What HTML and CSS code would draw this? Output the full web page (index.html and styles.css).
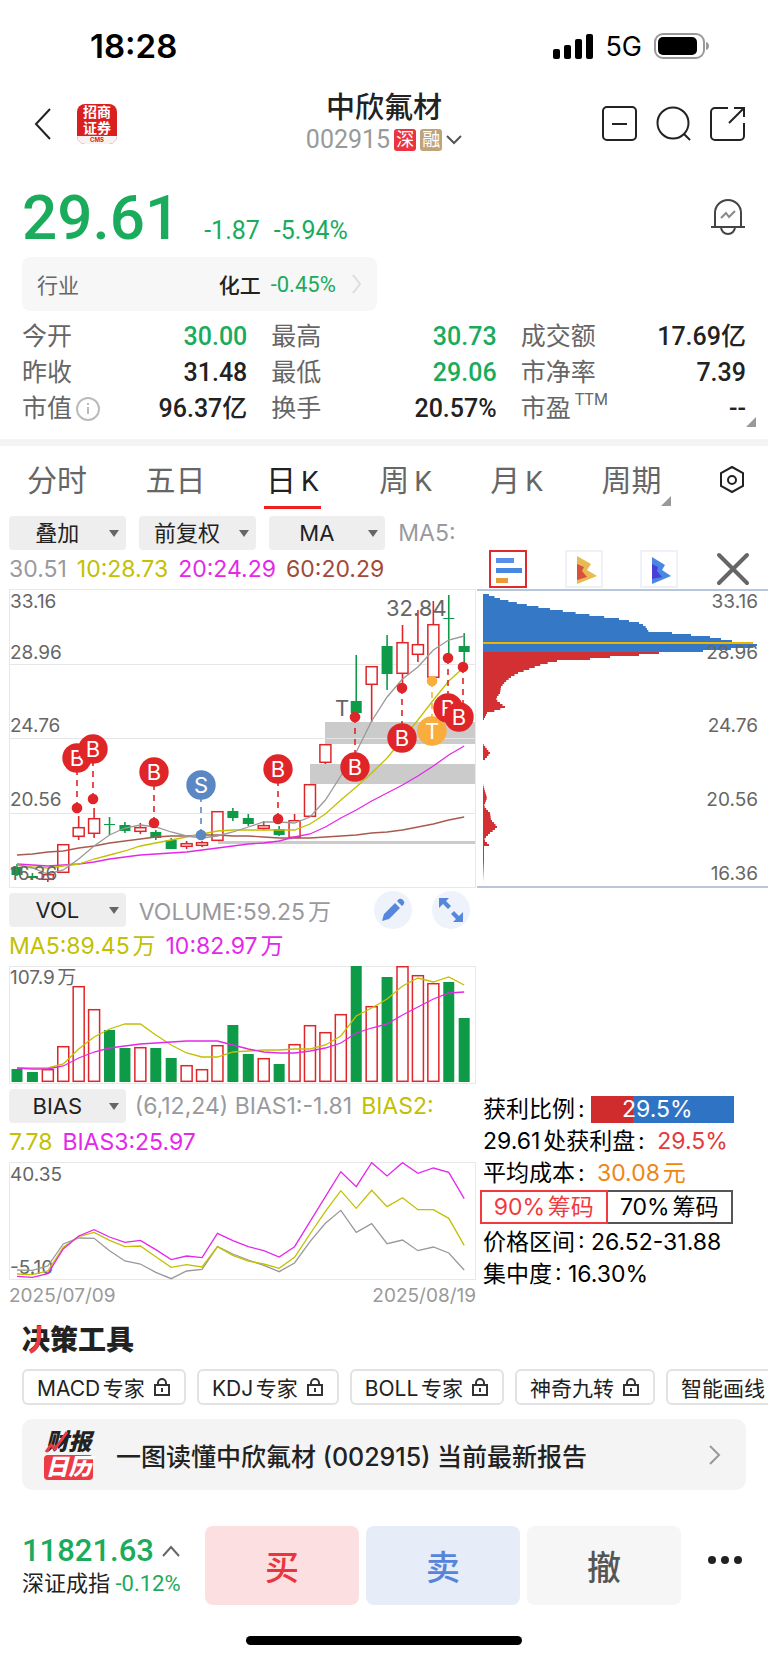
FILE: index.html
```html
<!DOCTYPE html>
<html lang="zh-CN">
<head>
    <meta charset="UTF-8">
    <meta name="viewport" content="width=device-width, initial-scale=1.0">
    <title>中欣氟材 002915</title>
    <link rel="stylesheet" href="styles.css">
</head>
<body>

<!-- Status bar -->
<div class="status-bar">
    <span class="time">18:28</span>
    <div class="status-icons">
        <svg width="40" height="25" viewBox="0 0 40 25">
            <rect x="0" y="15" width="7" height="10" rx="2"/>
            <rect x="11" y="11" width="7" height="14" rx="2"/>
            <rect x="22" y="5" width="7" height="20" rx="2"/>
            <rect x="33" y="0" width="7" height="25" rx="2"/>
        </svg>
        <span>5G</span>
        <svg width="56" height="26" viewBox="0 0 56 26">
            <rect x="1" y="1" width="49" height="24" rx="8" fill="none" stroke="#999" stroke-width="2"/>
            <rect x="4" y="4" width="39" height="18" rx="5"/>
            <path d="M52 9c4 1 4 7 0 8z" fill="#999"/>
        </svg>
    </div>
</div>

<!-- Header -->
<header class="header">
    <div class="header-side header-back">
        <button type="button" class="icon-btn" aria-label="返回">
            <svg width="18" height="32" viewBox="0 0 18 32"><path d="M16 1L2 16l14 15"/></svg>
        </button>
        <div class="broker-logo">
            <div class="broker-name">招商</div>
            <div class="broker-name">证券</div>
            <div class="broker-code">CMS</div>
        </div>
    </div>
    <div class="header-title">
        <h1>中欣氟材</h1>
        <div class="stock-code">
            <span>002915</span>
            <span class="tag tag-red">深</span>
            <span class="tag tag-gold">融</span>
            <svg width="16" height="10" viewBox="0 0 16 10"><path d="M1 1l7 7 7-7"/></svg>
        </div>
    </div>
    <div class="header-side header-actions">
        <button type="button" class="icon-btn" aria-label="移除自选">
            <svg width="36" height="36" viewBox="0 0 36 36"><rect x="1" y="1" width="33" height="33" rx="4"/><path d="M10 18h15"/></svg>
        </button>
        <button type="button" class="icon-btn" aria-label="搜索">
            <svg width="36" height="36" viewBox="0 0 36 36"><circle cx="17" cy="17" r="15.500"/><path d="M28 28l6 6"/></svg>
        </button>
        <button type="button" class="icon-btn" aria-label="分享">
            <svg width="36" height="36" viewBox="0 0 36 36"><path d="M18 2H5a4 4 0 0 0-4 4v24a4 4 0 0 0 4 4h25a4 4 0 0 0 4-4V17M24 2h10v9M34 2L19 17"/></svg>
        </button>
    </div>
</header>

<!-- Quote -->
<section class="quote">
    <div class="price-row">
        <span class="price">29.61</span>
        <span class="change">-1.87</span>
        <span class="change">-5.94%</span>
        <button type="button" class="icon-btn bell" aria-label="预警">
            <svg width="36" height="38" viewBox="0 0 36 38"><path d="M5 29V15a13 13 0 0 1 26 0v14M1 29h34M11 29a7 7 0 0 0 14 0"/><path d="M11 20l5-5 3 4 6-6" stroke="#888"/></svg>
        </button>
    </div>

    <a class="industry" href="#">
        <span class="industry-label">行业</span>
        <span class="industry-name">化工</span>
        <span class="green">-0.45%</span>
        <svg width="10" height="20" viewBox="0 0 10 20"><path d="M1 1l7 9-7 9"/></svg>
    </a>

    <dl class="stats">
        <div><dt>今开</dt><dd class="green">30.00</dd></div>
        <div><dt>最高</dt><dd class="green">30.73</dd></div>
        <div><dt>成交额</dt><dd>17.69亿</dd></div>
        <div><dt>昨收</dt><dd>31.48</dd></div>
        <div><dt>最低</dt><dd class="green">29.06</dd></div>
        <div><dt>市净率</dt><dd>7.39</dd></div>
        <div>
            <dt>市值<svg width="24" height="24" viewBox="0 0 24 24"><circle cx="12" cy="12" r="11"/><path d="M12 10v7M12 6v2"/></svg></dt>
            <dd>96.37亿</dd>
        </div>
        <div><dt>换手</dt><dd>20.57%</dd></div>
        <div class="expandable"><dt>市盈<sup>TTM</sup></dt><dd>--</dd></div>
    </dl>
</section>

<!-- Period tabs -->
<nav class="tabs">
    <button type="button">分时</button>
    <button type="button">五日</button>
    <button type="button" class="active">日<span>K</span></button>
    <button type="button">周<span>K</span></button>
    <button type="button">月<span>K</span></button>
    <button type="button" class="more">周期</button>
    <button type="button" class="settings" aria-label="设置">
        <svg width="24" height="30" viewBox="2 0 24 30"><path d="M14 2l11 6v13l-11 6-11-6V8z"/><circle cx="14" cy="15" r="4"/></svg>
    </button>
</nav>

<!-- Charts -->
<main class="charts">
    <div class="chart-col">
        <div class="toolbar">
            <label class="dropdown"><select aria-label="叠加"><option>叠加</option></select></label>
            <label class="dropdown"><select aria-label="复权"><option>前复权</option></select></label>
            <label class="dropdown"><select aria-label="指标"><option>MA</option></select></label>
            <span class="gray">MA5:</span>
        </div>
        <div class="legend">
            <span class="gray">30.51</span>
            <span class="olive">10:28.73</span>
            <span class="magenta">20:24.29</span>
            <span class="brown">60:20.29</span>
        </div>
        <svg class="chart" id="kline" viewBox="0 0 467 299"></svg>

        <div class="toolbar">
            <label class="dropdown"><select aria-label="成交量"><option>VOL</option></select></label>
            <span class="gray">VOLUME:59.25万</span>
            <div class="round-btns">
                <button type="button" aria-label="画线">
                    <svg width="24" height="24" viewBox="0 0 24 24"><path d="M1 23l2-7L14 5l5 5L8 21z M16 3l2-2q2-1 4 1t1 4l-2 2z"/></svg>
                </button>
                <button type="button" aria-label="全屏">
                    <svg width="24" height="24" viewBox="0 0 24 24"><path d="M0 0h10L7 3l5 5-3 3-5-5-4 4z M24 24H14l3-3-5-5 3-3 5 5 4-4z"/></svg>
                </button>
            </div>
        </div>
        <div class="legend">
            <span class="olive">MA5:89.45万</span>
            <span class="magenta">10:82.97万</span>
        </div>
        <svg class="chart" id="volume" viewBox="0 0 467 118"></svg>

        <div class="toolbar">
            <label class="dropdown"><select aria-label="乖离率"><option>BIAS</option></select></label>
            <span class="gray bias">(6,12,24) BIAS1:-1.81</span>
            <span class="olive bias">BIAS2:</span>
        </div>
        <div class="legend">
            <span class="olive">7.78</span>
            <span class="magenta">BIAS3:25.97</span>
        </div>
        <svg class="chart" id="bias" viewBox="0 0 467 118"></svg>
        <div class="dates"><span>2025/07/09</span><span>2025/08/19</span></div>
    </div>

    <div class="chips-col">
        <div class="chip-modes">
            <button type="button" class="selected" aria-label="筹码分布">
                <svg width="34" height="34" viewBox="0 0 34 34"><path fill="#5a8fe8" d="M5 6h18v5H5z"/><path fill="#4787e0" d="M5 16h26v5H5z"/><path fill="#ec9a35" d="M5 26h12v5H5z"/></svg>
            </button>
            <button type="button" aria-label="火焰山">
                <svg width="34" height="34" viewBox="0 0 34 34"><path fill="#e9b954" d="M10 4l14 8-4 6 10 6-20 8z"/><path fill="#d9513a" d="M10 12l7 3-2 4 5 6-10 3z"/></svg>
            </button>
            <button type="button" aria-label="活跃度">
                <svg width="34" height="34" viewBox="0 0 34 34"><path fill="#4a87e2" d="M10 5l13 8-3 5 9 6-19 8z"/><path fill="#483fd8" d="M10 12l6 3-1 4 5 6-10 2z"/></svg>
            </button>
            <button type="button" class="close" aria-label="关闭">
                <svg width="34" height="34" viewBox="0 0 34 34"><path d="M3 3l28 28M31 3L3 31"/></svg>
            </button>
        </div>
        <svg class="chart" id="chips" viewBox="0 0 291 299"></svg>

        <div class="chip-info">
            <div class="ratio"><span>获利比例:</span><div class="ratio-bar">29.5%</div></div>
            <div>29.61处获利盘: <span class="red">29.5%</span></div>
            <div>平均成本: <span class="orange">30.08元</span></div>
            <div class="switch">
                <button type="button" class="on">90%筹码</button>
                <button type="button">70%筹码</button>
            </div>
            <div>价格区间: 26.52-31.88</div>
            <div>集中度: 16.30%</div>
        </div>
    </div>
</main>

<!-- Tools -->
<section class="tools">
    <h2>决策工具<svg width="28" height="30" viewBox="0 0 28 30"><path d="M17 1v11q0 10-9 15"/></svg></h2>
    <div class="tool-list">
        <button type="button">MACD专家<svg width="18" height="20" viewBox="0 0 18 20"><path d="M2 8h14v10H2zM5 8V6a4 4 0 0 1 8 0v2M9 11v4"/></svg></button>
        <button type="button">KDJ专家<svg width="18" height="20" viewBox="0 0 18 20"><path d="M2 8h14v10H2zM5 8V6a4 4 0 0 1 8 0v2M9 11v4"/></svg></button>
        <button type="button">BOLL专家<svg width="18" height="20" viewBox="0 0 18 20"><path d="M2 8h14v10H2zM5 8V6a4 4 0 0 1 8 0v2M9 11v4"/></svg></button>
        <button type="button">神奇九转<svg width="18" height="20" viewBox="0 0 18 20"><path d="M2 8h14v10H2zM5 8V6a4 4 0 0 1 8 0v2M9 11v4"/></svg></button>
        <button type="button">智能画线<svg width="18" height="20" viewBox="0 0 18 20"><path d="M2 8h14v10H2zM5 8V6a4 4 0 0 1 8 0v2M9 11v4"/></svg></button>
    </div>
    <a class="report" href="#">
        <span class="report-logo">
            <span class="logo-top">财报<svg width="26" height="24" viewBox="0 0 26 24"><path d="M2 22l5-7 4 4L23 2"/></svg></span>
            <span class="logo-bottom">日历</span>
        </span>
        <span class="report-title">一图读懂中欣氟材 (002915) 当前最新报告</span>
        <svg width="12" height="20" viewBox="0 0 12 20"><path d="M1 1l9 9-9 9"/></svg>
    </a>
</section>

<!-- Bottom bar -->
<footer class="trade-bar">
    <div class="index">
        <div class="index-value">11821.63<svg width="18" height="12" viewBox="0 0 18 12"><path d="M1 11l8-9 8 9"/></svg></div>
        <div class="index-name">深证成指 <span class="green">-0.12%</span></div>
    </div>
    <div class="trade-btns">
        <button type="button" class="buy">买</button>
        <button type="button" class="sell">卖</button>
        <button type="button" class="cancel">撤</button>
    </div>
    <button type="button" class="icon-btn dots" aria-label="更多">
        <svg width="34" height="8" viewBox="0 0 34 8"><circle cx="4" cy="4" r="3"/><circle cx="17" cy="4" r="3"/><circle cx="30" cy="4" r="3"/></svg>
    </button>
</footer>
<div class="home-indicator"></div>

<script src="script.js"></script>
</body>
</html>
```
FILE: styles.css
```css
* {
    box-sizing: border-box;
}

body {
    margin: 0;
    background: #fff;
    color: #222;
    font-family: Inter, "Noto Sans CJK SC", sans-serif;
    font-size: 22px;
    text-autospace: normal;
    overflow-x: hidden;
}

button, select {
    font: inherit;
    color: inherit;
    border: none;
    background: none;
    padding: 0;
    margin: 0;
    cursor: pointer;
}

a {
    color: inherit;
    text-decoration: none;
}

svg {
    display: block;
    flex: none;
}

.green { color: #1aab5c; }
.gray { color: #999a9e; }
.olive { color: #c2c000; }
.magenta { color: #e428ea; }
.brown { color: #a04a3a; }
.red { color: #e23b3b; }
.orange { color: #ee8512; }

/* Status bar */
.status-bar {
    display: flex;
    justify-content: space-between;
    align-items: center;
    height: 92px;
    padding: 0 58px 0 90px;
    color: #000;
}

.time {
    font-size: 33px;
    font-weight: 600;
}

.status-icons {
    display: flex;
    align-items: center;
    gap: 12px;
    font-size: 27px;
}

/* Header */
.header {
    display: grid;
    grid-template-columns: 1fr auto 1fr;
    align-items: center;
    height: 64px;
    padding: 0 22px;
}

.header-side {
    display: flex;
    align-items: center;
    gap: 25px;
}

.header-back {
    padding-left: 12px;
}

.header-actions {
    justify-content: flex-end;
    gap: 18px;
}

.icon-btn svg {
    fill: none;
    stroke: #222;
    stroke-width: 2;
}

.broker-logo {
    width: 40px;
    border-radius: 8px;
    overflow: hidden;
    background: #d9201f;
    color: #fff;
    text-align: center;
}

.broker-name {
    font-size: 14px;
    font-weight: 700;
    line-height: 16px;
}

.broker-code {
    background: #f6f2f2;
    color: #d9201f;
    font-size: 6px;
    font-weight: 700;
    line-height: 8px;
}

.header-title {
    text-align: center;
}

h1 {
    margin: 0;
    font-size: 29px;
    font-weight: 500;
    line-height: 32px;
}

.stock-code {
    display: flex;
    align-items: center;
    gap: 4px;
    color: #999;
    font-family: Roboto, "Noto Sans CJK SC", sans-serif;
    font-size: 25px;
    line-height: 32px;
}

.stock-code svg {
    fill: none;
    stroke: #555;
    stroke-width: 2;
}

.tag {
    width: 22px;
    border-radius: 3px;
    color: #fff;
    font-size: 18px;
    line-height: 22px;
}

.tag-red { background: #ea3440; }
.tag-gold { background: #bfa37a; }

/* Quote */
.quote {
    padding: 20px 22px 12px;
    font-family: Roboto, "Noto Sans CJK SC", sans-serif;
}

.price-row {
    display: flex;
    align-items: baseline;
    gap: 14px;
    height: 81px;
    color: #1aab5c;
    line-height: 84px;
}

.price {
    margin-right: 10px;
    font-size: 62px;
    font-weight: 500;
}

.change {
    font-size: 25px;
}

.bell {
    align-self: center;
    margin-left: auto;
}

.bell svg {
    stroke: #444;
}

.industry {
    display: flex;
    align-items: center;
    gap: 10px;
    width: 49%;
    height: 54px;
    padding: 0 15px;
    border-radius: 8px;
    background: #f7f7f7;
}

.industry-label {
    margin-right: auto;
    color: #666;
    font-size: 21px;
}

.industry-name {
    font-size: 21px;
    font-weight: 500;
}

.industry svg {
    margin-left: 6px;
    fill: none;
    stroke: #ddd;
    stroke-width: 2;
}

.stats {
    display: grid;
    grid-template-columns: repeat(3, 1fr);
    column-gap: 24px;
    margin: 8px 0 0;
}

.stats div {
    display: flex;
    justify-content: space-between;
    align-items: center;
    height: 36px;
    line-height: 36px;
}

dt {
    display: flex;
    align-items: center;
    gap: 4px;
    color: #666;
    font-size: 25px;
}

dt svg {
    fill: none;
    stroke: #bbb;
    stroke-width: 2;
}

dt sup {
    align-self: flex-start;
    font-size: 16px;
    line-height: 18px;
}

dd {
    margin: 0;
    font-size: 25px;
    font-weight: 500;
    text-autospace: no-autospace;
}

.expandable,
.tabs .more {
    position: relative;
}

.expandable::after,
.tabs .more::after {
    content: "";
    position: absolute;
    right: -10px;
    bottom: 0;
    border: 5px solid;
    border-color: transparent #999 #999 transparent;
}

/* Period tabs */
.tabs {
    display: flex;
    justify-content: space-between;
    align-items: center;
    height: 70px;
    padding: 0 24px 0 27px;
    border-top: 7px solid #f4f4f4;
    color: #666;
    font-size: 30px;
    text-autospace: no-autospace;
}

.tabs button {
    height: 63px;
    border-top: 8px solid transparent;
    border-bottom: 3px solid transparent;
    line-height: 52px;
}

.tabs span {
    margin-left: 5px;
    font-family: Roboto, sans-serif;
    font-size: 28px;
}

.tabs .active {
    padding: 0 2px;
    border-bottom-color: #f02020;
    color: #222;
}

.tabs .settings svg {
    fill: none;
    stroke: #222;
    stroke-width: 2;
}

/* Charts */
.charts {
    display: grid;
    grid-template-columns: 467fr 291fr;
    column-gap: 1px;
    padding: 7px 0 0 9px;
}

.chart {
    width: 100%;
    height: auto;
}

.chart-col .chart {
    margin-bottom: 5px;
}

.toolbar {
    display: flex;
    align-items: center;
    gap: 13px;
    height: 34px;
    font-size: 23px;
    white-space: nowrap;
}

.bias {
    margin-left: -4px;
}

.dropdown {
    position: relative;
    width: 25%;
    flex: none;
    font-size: 22px;
}

.dropdown::after {
    content: "";
    position: absolute;
    top: 14px;
    right: 7px;
    border: 5px solid transparent;
    border-top: 7px solid #666;
    border-bottom: none;
    pointer-events: none;
}

.dropdown select {
    display: block;
    width: 100%;
    height: 34px;
    padding-right: 20px;
    border-radius: 4px;
    background: #eee;
    appearance: none;
    text-align: center;
    text-align-last: center;
}

.legend {
    display: flex;
    gap: 10px;
    height: 39px;
    font-size: 23px;
    line-height: 39px;
}

.round-btns {
    display: flex;
    gap: 20px;
    margin: 0 6px 0 auto;
}

.round-btns button {
    width: 38px;
    height: 38px;
    padding: 7px;
    border-radius: 50%;
    background: #edf2fb;
}

.round-btns svg {
    fill: #5787dc;
}

.dates {
    display: flex;
    justify-content: space-between;
    color: #999;
    font-size: 19px;
    line-height: 21px;
}

.frame { fill: none; stroke: #e8e8e8; stroke-width: 1; }
.gap-zone { fill: #cbcbcb; }
.axis { fill: #666; font-size: 19px; }
.peak { fill: #666; font-size: 22px; }
.marker { fill: #fff; font-size: 22px; text-anchor: middle; }

/* Chip distribution */
.chip-modes {
    display: flex;
    align-items: center;
    justify-content: space-between;
    height: 73px;
    padding: 32px 18px 0 12px;
}

.chip-modes button {
    width: 38px;
    height: 38px;
    border: 2px solid #eef1f7;
}

.chip-modes .selected {
    border-color: #e02a30;
}

.chip-modes .close {
    width: auto;
    border: none;
}

.close svg {
    stroke: #666;
    stroke-width: 4;
    stroke-linecap: round;
}

.chip-info {
    margin-top: 205px;
    padding-left: 6px;
    color: #000;
    line-height: 32px;
    font-size: 23px;
    white-space: nowrap;
}

.chip-info .red,
.chip-info .orange {
    margin-left: 6px;
}

.ratio {
    display: flex;
    align-items: center;
    gap: 6px;
    padding-right: 34px;
}

.ratio-bar {
    flex: 1;
    padding-right: 10px;
    background: linear-gradient(to right, #d02c2e 29.5%, #2f74c4 29.5%);
    color: #fff;
    line-height: 27px;
    text-align: center;
}

.switch {
    display: flex;
    margin: 1px 35px 2px -3px;
}

.switch button {
    flex: 1;
    border: 2px solid #555;
    border-left: none;
    line-height: 30px;
}

.switch .on {
    border: 2px solid #f03a40;
    color: #f03a40;
}

/* Tools */
.tools {
    padding: 14px 22px 0;
}

h2 {
    position: relative;
    margin: 0;
    font-size: 28px;
    font-weight: 900;
    line-height: 40px;
}

h2 svg {
    position: absolute;
    top: 5px;
    left: 0;
    fill: none;
    stroke: #ee3a44;
    stroke-width: 4;
}

.tool-list {
    display: flex;
    gap: 11px;
    margin: 9px -22px 14px 0;
    overflow: hidden;
}

.tool-list button {
    display: flex;
    flex: none;
    align-items: center;
    gap: 8px;
    height: 36px;
    padding: 0 13px;
    border: 2px solid #e2e2e2;
    border-radius: 6px;
    font-size: 21px;
}

.tool-list svg {
    fill: none;
    stroke: #333;
    stroke-width: 2;
}

.report {
    display: flex;
    align-items: center;
    height: 71px;
    padding: 0 25px 0 22px;
    border-radius: 10px;
    background: #f4f4f4;
}

.report-logo {
    width: 49px;
    margin-right: 23px;
    font-size: 23px;
    font-style: italic;
    font-weight: 900;
    line-height: 25px;
    text-align: center;
}

.logo-top {
    display: block;
    position: relative;
}

.logo-top svg {
    position: absolute;
    top: 0;
    left: 0;
    fill: none;
    stroke: #ee3a44;
    stroke-width: 3;
}

.logo-bottom {
    display: block;
    border-radius: 4px;
    background: #ee3a44;
    color: #fff;
}

.report-title {
    flex: 1;
    font-size: 25px;
    font-weight: 500;
}

.report > svg {
    fill: none;
    stroke: #999;
    stroke-width: 2;
}

/* Bottom bar */
.trade-bar {
    display: flex;
    align-items: center;
    margin-top: 36px;
    padding: 0 26px 0 22px;
}

.index {
    width: 183px;
    font-family: Roboto, "Noto Sans CJK SC", sans-serif;
    white-space: nowrap;
}

.index-value {
    display: flex;
    align-items: center;
    gap: 8px;
    color: #1aab5c;
    font-size: 31px;
    font-weight: 500;
    line-height: 36px;
}

.index-value svg {
    fill: none;
    stroke: #666;
    stroke-width: 2;
}

.index-name {
    font-size: 22px;
    line-height: 30px;
}

.trade-btns {
    display: flex;
    flex: 1;
    gap: 7px;
}

.trade-btns button {
    flex: 1;
    height: 79px;
    border-radius: 8px;
    font-size: 34px;
    font-weight: 500;
}

.buy { background: #fce0e1; color: #ea3440; }
.sell { background: #e6ecf8; color: #5584d8; }
.cancel { background: #f6f6f6; color: #555; }

.dots {
    margin-left: 27px;
    padding-bottom: 12px;
}

.dots svg {
    fill: #222;
}

.home-indicator {
    width: 36%;
    height: 9px;
    margin: 31px auto 15px;
    border-radius: 5px;
    background: #000;
}
```
FILE: script.js
```js
const RED = "#e02528";
const GREEN = "#0e9b47";
const GRAY = "#999";
const OLIVE = "#c2c000";
const MAGENTA = "#e428ea";
const BROWN = "#a85a4c";
const BLUE = "#5b88c4";
const ORANGE = "#f9ad3c";

// Center of the candle at index i
const cx = i => 8 + i * 15.42;

function line(x1, y1, x2, y2, color, width = 2, extra = "") {
    return `<line x1="${x1}" y1="${y1}" x2="${x2}" y2="${y2}" stroke="${color}" stroke-width="${width}" ${extra}/>`;
}

function polyline(ys, color, top = 0, scale = 1) {
    const points = ys.map((y, i) => `${cx(i)},${(y - top) / scale}`).join(" ");
    return `<polyline points="${points}" fill="none" stroke="${color}" stroke-width="1.3"/>`;
}

function bar(i, top, bottom, color) {
    const x = cx(i);
    if (color === "g") {
        return `<rect x="${x - 5.5}" y="${top}" width="11" height="${Math.max(bottom - top, 1)}" fill="${GREEN}"/>`;
    }
    return `<rect x="${x - 5.5}" y="${top + 0.7}" width="11" height="${Math.max(bottom - top - 1.4, 1)}" fill="#fff" stroke="${RED}" stroke-width="1.5"/>`;
}

function axis(x, y, text, extra = "") {
    return `<text class="axis" x="${x}" y="${y}" ${extra}>${text}</text>`;
}

const prices = [[19, "33.16"], [70, "28.96"], [143, "24.76"], [217, "20.56"], [291, "16.36"]];

// ---- K line: color, high, body top, body bottom, low ----
const candles = [
    ["g", 275, 278, 286, 287], ["g", 284, 287, 289, 291], ["r", 283, 285, 291, 293],
    ["r", 255, 255, 284, 284], ["r", 227, 238, 248, 251], ["r", 219, 229, 245, 249],
    ["g", 228, 235, 236, 246], ["g", 233, 236, 242, 244], ["r", 234, 238, 243, 245],
    ["g", 241, 243, 249, 251], ["g", 249, 251, 260, 260], ["r", 252, 254, 258, 260],
    ["r", 252, 253, 257, 258], ["r", 222, 222, 252, 252], ["g", 219, 222, 229, 232],
    ["g", 225, 229, 235, 237], ["r", 232, 236, 240, 241], ["g", 237, 240, 246, 247],
    ["r", 225, 231, 249, 249], ["r", 195, 195, 228, 228], ["r", 155, 155, 174, 175],
    null, ["g", 66, 112, 124, 126], ["r", 77, 77, 96, 133], ["g", 46, 57, 85, 101],
    ["r", 36, 53, 85, 97], ["r", 21, 55, 66, 73], ["r", 12, 35, 89, 89],
    ["g", 6, 29, 30, 67], ["g", 44, 57, 63, 76]
];

const ma5 = [276, 279, 285, 281, 270, 257, 246, 239, 236, 238, 243, 247, 249, 247, 243, 238, 233, 233, 234, 228, 211, 187, 163, 132, 108, 90, 78, 61, 51, 47];
const ma10 = [276, 278, 279, 277, 275, 270, 266, 262, 257, 254, 251, 248, 245, 242, 241, 241, 241, 241, 241, 235, 225, 211, 198, 184, 169, 150, 131, 111, 92, 78];
const ma20 = [275, 276, 277, 276, 275, 273, 270, 268, 266, 265, 264, 263, 261, 259, 257, 255, 254, 252, 248, 245, 238, 229, 221, 212, 204, 196, 187, 177, 166, 157];
const ma60 = [266, 265, 263, 262, 259, 257, 254, 252, 250, 248, 247, 247, 246, 246, 247, 247, 248, 249, 249, 249, 248, 247, 246, 244, 243, 241, 238, 235, 231, 228];

// x, dot y, badge x, badge y, letter, color
const trades = [
    [68, 219, 68, 169, "B", RED], [84, 210, 84, 160, "B", RED], [145, 234, 145, 183, "B", RED],
    [192, 246, 192, 196, "S", BLUE], [269, 230, 269, 180, "B", RED], [346, 128, 346, 178, "B", RED],
    [393, 99, 393, 149, "B", RED], [423, 92, 423, 142, "T", ORANGE], [439, 69, 439, 119, "B", RED],
    [454, 78, 450, 128, "B", RED]
];

let k = `<rect class="gap-zone" x="316" y="133" width="150" height="22"/>
    <rect class="gap-zone" x="301" y="175" width="165" height="20"/>
    <rect class="gap-zone" x="209" y="252" width="257" height="3"/>
    <rect class="frame" x="0.5" y="0.5" width="466" height="298"/>`;
[75, 149, 224].forEach(y => { k += line(1, y + 0.5, 466, y + 0.5, "#e6e6e6", 1); });
k += `<text class="peak" x="377" y="27">32.84</text><text class="peak" x="326" y="127">T</text>`;
candles.forEach((c, i) => {
    if (!c) return;
    const [color, high, top, bottom, low] = c;
    const stroke = color === "g" ? GREEN : RED;
    k += line(cx(i), high, cx(i), low, stroke, 1.6) + bar(i, top, bottom, color);
});
k += polyline(ma60, BROWN) + polyline(ma20, MAGENTA) + polyline(ma10, OLIVE) + polyline(ma5, GRAY);
prices.forEach(([y, text]) => { k += axis(1, y, text); });
trades.forEach(([x, y, bx, by, letter, color]) => {
    k += line(x, y, x, by, color, 1.6, 'stroke-dasharray="6 5"');
    k += `<circle cx="${x}" cy="${y}" r="5.3" fill="${color}"/><circle cx="${bx}" cy="${by}" r="14.7" fill="${color}"/>`;
    k += `<text class="marker" x="${bx}" y="${by + 8}">${letter}</text>`;
});
document.getElementById("kline").innerHTML = k;

// ---- Volume: color and bar top ----
const volumes = [
    ["g", 103], ["g", 106], ["r", 103], ["r", 80], ["r", 20], ["r", 43], ["g", 64], ["g", 82], ["r", 81], ["g", 82],
    ["g", 92], ["r", 99], ["r", 103], ["r", 79], ["g", 59], ["g", 88], ["r", 92], ["g", 98], ["r", 78], ["r", 59],
    ["r", 66], ["r", 48], ["g", 0], ["r", 40], ["g", 11], ["r", 0], ["r", 9], ["r", 17], ["g", 16], ["g", 52]
];
const vol5 = [102, 102, 102, 98, 83, 71, 63, 58, 58, 69, 79, 87, 91, 91, 86, 85, 84, 84, 83, 83, 79, 70, 50, 42, 33, 20, 12, 16, 11, 19];
const vol10 = [102, 103, 103, 100, 92, 86, 82, 80, 78, 77, 76, 75, 75, 75, 79, 83, 86, 87, 87, 85, 82, 77, 67, 62, 58, 49, 41, 33, 27, 26];

let v = `<rect class="frame" x="0.5" y="0.5" width="466" height="117"/>` + axis(1, 18, "107.9万");
volumes.forEach(([color, top], i) => { v += bar(i, top, 116, color); });
v += polyline(vol5, OLIVE) + polyline(vol10, MAGENTA);
document.getElementById("volume").innerHTML = v;

// ---- BIAS ----
const bias1 = [570, 571, 558, 492, 474, 475, 512, 543, 552, 577, 596, 573, 568, 500, 522, 540, 556, 575, 549, 485, 430, 391, 457, 431, 491, 480, 512, 501, 519, 570];
const bias2 = [582, 584, 573, 502, 470, 457, 481, 500, 498, 530, 562, 554, 561, 500, 526, 543, 552, 565, 532, 462, 394, 332, 385, 331, 380, 353, 389, 389, 415, 496];
const bias3 = [589, 592, 581, 507, 468, 449, 471, 487, 481, 509, 539, 528, 533, 460, 482, 500, 512, 531, 500, 425, 350, 275, 320, 248, 288, 248, 280, 264, 277, 356];

document.getElementById("bias").innerHTML =
    `<rect class="frame" x="0.5" y="0.5" width="466" height="117"/>` +
    axis(1, 19, "40.35") + axis(1, 112, "-5.10") +
    polyline(bias1, GRAY, 246, 3) + polyline(bias2, OLIVE, 246, 3) + polyline(bias3, MAGENTA, 246, 3);

// ---- Chip distribution: y, width ----
const profile = [
    [5, 6], [9, 17], [14, 38], [19, 67], [24, 99], [29, 136], [33, 156], [36, 162], [42, 166], [43, 189],
    [47, 227], [51, 249], [54, 270], [56, 278], [58, 263], [60, 233], [62, 207], [63, 176], [65, 156], [67, 127],
    [69, 107], [71, 74], [74, 60], [78, 49], [83, 35], [87, 28], [92, 22], [97, 18], [103, 17], [107, 14],
    [110, 13], [113, 17], [117, 22], [120, 15], [123, 4], [127, 2], [131, 0], [154, 0], [158, 3], [163, 7],
    [167, 4], [171, 0], [194, 0], [198, 1], [208, 4], [216, 1], [220, 4], [223, 7], [230, 8], [233, 11],
    [237, 14], [240, 11], [243, 7], [247, 3], [250, 1], [253, 4], [255, 6], [257, 1], [270, 1], [292, 0]
];

let c = line(0, 1, 291, 1, "#b8c6dc") + line(0, 298, 291, 298, "#b8c6dc");
for (let y = 5; y < 292; y += 2) {
    const n = profile.findIndex(p => p[0] > y);
    if (n < 1) continue;
    const [y0, w0] = profile[n - 1];
    const [y1, w1] = profile[n];
    const w = w0 + (w1 - w0) * (y - y0) / (y1 - y0);
    c += `<rect x="6" y="${y}" width="${w}" height="2" fill="${y < 62 ? "#3478c6" : "#d23033"}"/>`;
}
c += line(6, 54, 276, 54, "#f0b400");
prices.forEach(([y, text]) => { c += axis(281, y, text, 'text-anchor="end"'); });
document.getElementById("chips").innerHTML = c;
```
